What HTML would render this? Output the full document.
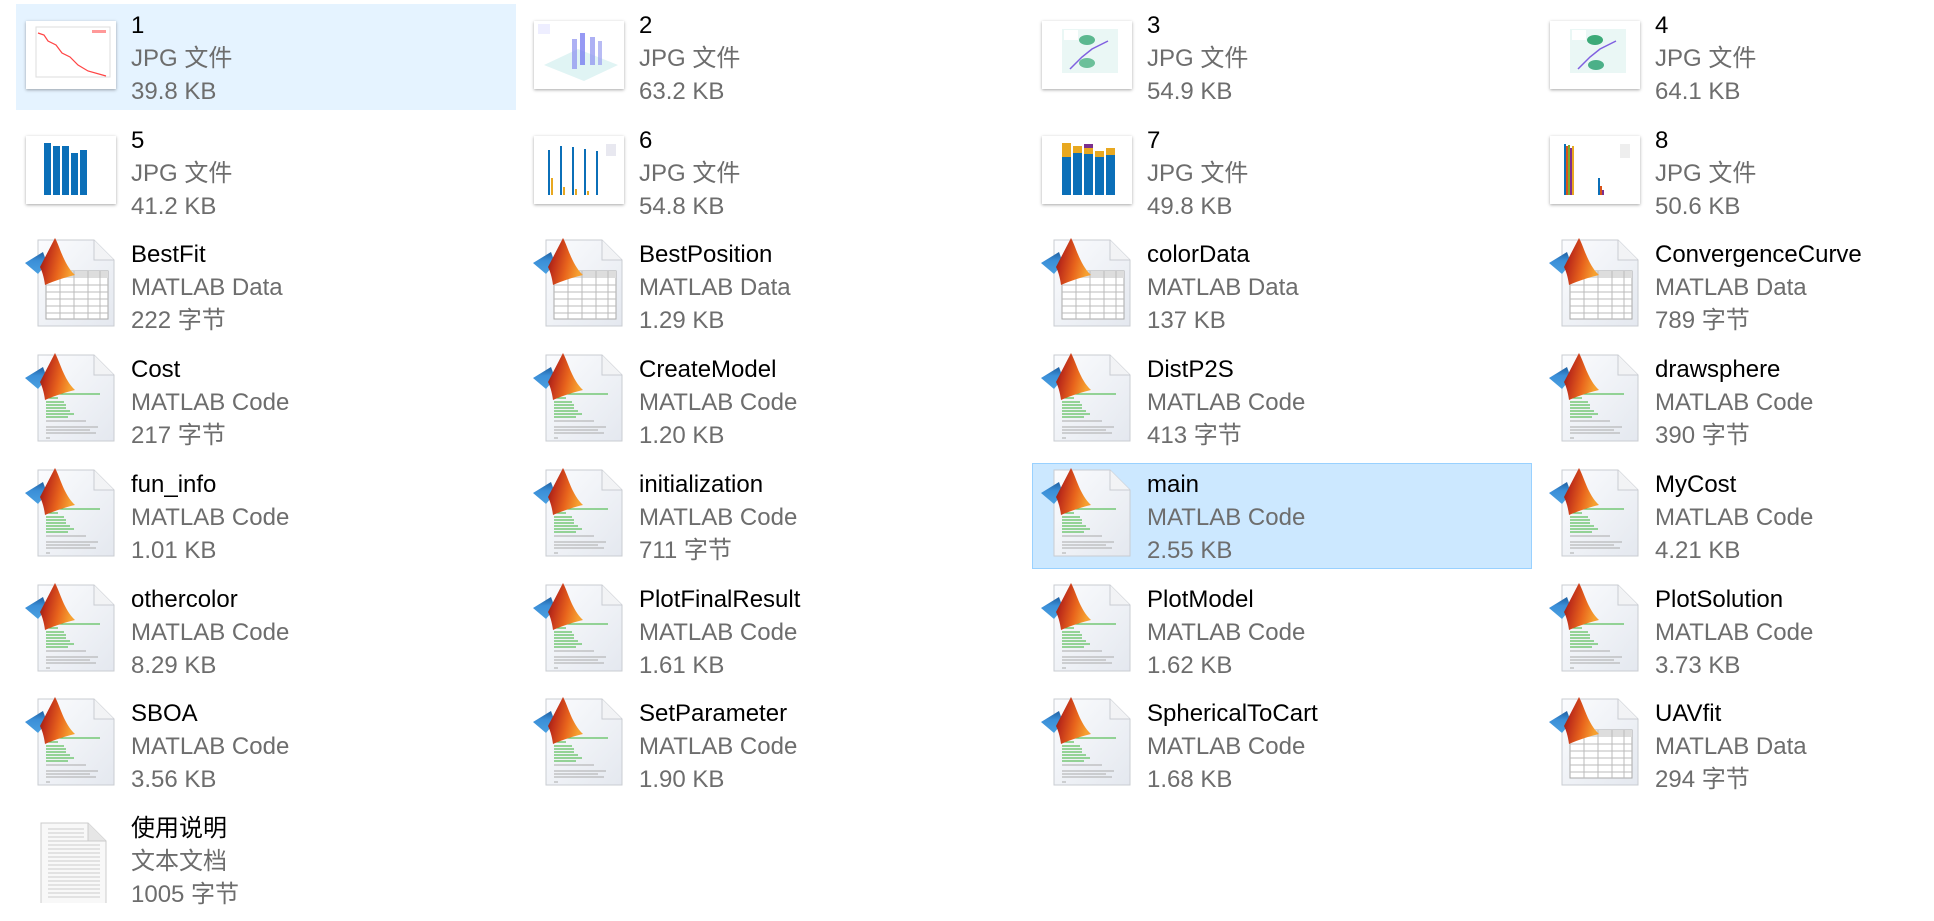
<!DOCTYPE html>
<html><head><meta charset="utf-8">
<style>
html,body{margin:0;padding:0;background:#fff;width:1934px;height:921px;overflow:hidden}
.it{position:absolute;width:500px;height:106px;box-sizing:border-box}
.sel1{background:#e5f3ff}
.sel2{background:#cce8ff;border:1px solid #99d1ff}
.tx{position:absolute;left:115px;top:5px;font-family:"Liberation Sans","Noto Sans CJK SC",sans-serif;font-size:24px;line-height:33px;color:#6d6d6d;white-space:nowrap}
.tx b{font-weight:normal;color:#000;display:block}
.tx span{display:block}
.th{position:absolute;left:10px;top:17px;width:90px;height:68px;background:#fff;box-shadow:0 1px 3px rgba(0,0,0,.35)}
.ic{position:absolute;left:8px;top:4px;width:100px;height:92px}
</style></head><body>
<svg width="0" height="0" style="position:absolute">
<defs>
<linearGradient id="pg" x1="0" y1="0" x2="1" y2="1"><stop offset="0" stop-color="#fbfcfe"/><stop offset="1" stop-color="#e4e8ef"/></linearGradient>
<linearGradient id="og" x1="0" y1="0" x2="1" y2="0.3"><stop offset="0" stop-color="#7a1510"/><stop offset=".3" stop-color="#c0301a"/><stop offset=".65" stop-color="#e8641c"/><stop offset="1" stop-color="#f6a030"/></linearGradient>
<linearGradient id="bg" x1="0" y1="0" x2="0" y2="1"><stop offset="0" stop-color="#1f5fa0"/><stop offset=".4" stop-color="#3b8fd8"/><stop offset="1" stop-color="#4aa0e0"/></linearGradient>
<g id="page"><path d="M14 3 H70 L90 23 V89 H14 Z" fill="url(#pg)" stroke="#c9ccd2"/><path d="M70 3 V23 H90" fill="#f2f3f5" stroke="#c9ccd2"/></g>
<g id="logo"><path d="M1 26 L19 15 L23 26 L14 37 Z" fill="url(#bg)"/><path d="M16 30 L31 1 C36 10 40 28 51 38 C42 40 30 44 21 48 C20 40 18 34 16 30 Z" fill="url(#og)"/></g>
<g id="data"><use href="#page"/><rect x="22" y="34" width="62" height="48" fill="#fff" stroke="#aaa"/><rect x="22" y="34" width="62" height="7" fill="#ddd"/><path d="M22 48H84M22 55H84M22 62H84M22 69H84M22 76H84M36 34V82M50 34V82M64 34V82M76 34V82" stroke="#bbb" fill="none"/></g>
<g id="code"><use href="#page"/><path d="M34 42H76M22 46H34M22 50H40M22 53H42M22 56H42M22 59H46M22 62H50M22 65H44" stroke="#5cbf5c" stroke-width="1.2"/><path d="M22 69H62M22 75H74M22 78H66M22 81H72M22 86H26" stroke="#aaa" stroke-width="1"/></g>
<g id="matdata"><use href="#data"/><use href="#logo"/></g>
<g id="matcode"><use href="#code"/><use href="#logo"/></g>
<g id="txt"><path d="M17 12 H64 L82 30 V94 H17 Z" fill="#f8f8f8" stroke="#ccc"/><path d="M64 12V30H82" fill="#e6e6e6" stroke="#ccc"/><path d="M24 18H60M24 22H60M24 26H60M24 30H76M24 34H76M24 38H76M24 42H76M24 46H76M24 50H76M24 54H76M24 58H76M24 62H76M24 66H76M24 70H76M24 74H76M24 78H76M24 82H76M24 86H76" stroke="#ccc"/></g>
</defs></svg>

<!-- Row 1 -->
<div class="it sel1" style="left:16px;top:4px"><div class="th"><svg width="90" height="68"><rect x="10" y="6" width="74" height="50" fill="none" stroke="#ddd"/><path d="M12 12 L18 14 L22 20 L30 24 L36 32 L44 36 L52 44 L62 50 L80 55" stroke="#f44" fill="none" stroke-width="1.2"/><rect x="66" y="9" width="14" height="3" fill="#f99"/></svg></div><div class="tx"><b>1</b><span>JPG 文件</span><span>39.8 KB</span></div></div>
<div class="it" style="left:524px;top:4px"><div class="th"><svg width="90" height="68"><path d="M10 44 L44 28 L84 44 L50 60 Z" fill="#e0f4f4"/><rect x="38" y="18" width="5" height="30" fill="#8a8ef0" opacity=".7"/><rect x="46" y="12" width="5" height="32" fill="#6a6ef0" opacity=".7"/><rect x="56" y="16" width="5" height="28" fill="#8a8ef0" opacity=".7"/><rect x="64" y="20" width="4" height="24" fill="#9a9ef0" opacity=".7"/><rect x="4" y="3" width="12" height="10" fill="#eef"/></svg></div><div class="tx"><b>2</b><span>JPG 文件</span><span>63.2 KB</span></div></div>
<div class="it" style="left:1032px;top:4px"><div class="th"><svg width="90" height="68"><rect x="20" y="8" width="56" height="44" fill="#eaf7f5"/><ellipse cx="45" cy="19" rx="8" ry="5" fill="#5cb890"/><ellipse cx="45" cy="42" rx="8" ry="5" fill="#6cc09a"/><path d="M28 48 L40 36 L50 28 L66 20" stroke="#8060e0" fill="none" stroke-width="1.5"/><rect x="22" y="9" width="14" height="10" fill="#fff"/></svg></div><div class="tx"><b>3</b><span>JPG 文件</span><span>54.9 KB</span></div></div>
<div class="it" style="left:1540px;top:4px"><div class="th"><svg width="90" height="68"><rect x="20" y="8" width="56" height="44" fill="#eaf7f5"/><ellipse cx="45" cy="19" rx="8" ry="5" fill="#3caa78"/><ellipse cx="46" cy="44" rx="8" ry="5" fill="#4cb088"/><path d="M28 48 L40 36 L50 28 L66 20" stroke="#8060e0" fill="none" stroke-width="1.5"/><rect x="22" y="9" width="14" height="10" fill="#fff"/></svg></div><div class="tx"><b>4</b><span>JPG 文件</span><span>64.1 KB</span></div></div>
<!-- Row 2 -->
<div class="it" style="left:16px;top:119px"><div class="th"><svg width="90" height="68"><rect x="18" y="7" width="7" height="52" fill="#0b6fb8"/><rect x="27" y="10" width="7" height="49" fill="#0b6fb8"/><rect x="36" y="10" width="7" height="49" fill="#0b6fb8"/><rect x="45" y="17" width="7" height="42" fill="#0b6fb8"/><rect x="54" y="14" width="7" height="45" fill="#0b6fb8"/></svg></div><div class="tx"><b>5</b><span>JPG 文件</span><span>41.2 KB</span></div></div>
<div class="it" style="left:524px;top:119px"><div class="th"><svg width="90" height="68"><rect x="14" y="14" width="2" height="45" fill="#0b6fb8"/><rect x="26" y="10" width="2" height="49" fill="#0b6fb8"/><rect x="38" y="11" width="2" height="48" fill="#0b6fb8"/><rect x="50" y="13" width="2" height="46" fill="#0b6fb8"/><rect x="62" y="15" width="2" height="44" fill="#0b6fb8"/><rect x="17" y="42" width="2" height="17" fill="#e8a820"/><rect x="29" y="51" width="2" height="8" fill="#e8a820"/><rect x="41" y="53" width="2" height="6" fill="#e8a820"/><rect x="53" y="55" width="2" height="4" fill="#e8a820"/><rect x="72" y="8" width="10" height="12" fill="#e8e8f0"/></svg></div><div class="tx"><b>6</b><span>JPG 文件</span><span>54.8 KB</span></div></div>
<div class="it" style="left:1032px;top:119px"><div class="th"><svg width="90" height="68"><rect x="20" y="21" width="9" height="38" fill="#0b6fb8"/><rect x="20" y="7" width="9" height="14" fill="#e8a820"/><rect x="31" y="17" width="9" height="42" fill="#0b6fb8"/><rect x="31" y="10" width="9" height="7" fill="#e8a820"/><rect x="42" y="18" width="9" height="41" fill="#0b6fb8"/><rect x="42" y="12" width="9" height="6" fill="#e8a820"/><rect x="42" y="8" width="9" height="4" fill="#7b2f8e"/><rect x="53" y="21" width="9" height="38" fill="#0b6fb8"/><rect x="53" y="15" width="9" height="6" fill="#e8a820"/><rect x="64" y="19" width="9" height="40" fill="#0b6fb8"/><rect x="64" y="12" width="9" height="7" fill="#e8a820"/></svg></div><div class="tx"><b>7</b><span>JPG 文件</span><span>49.8 KB</span></div></div>
<div class="it" style="left:1540px;top:119px"><div class="th"><svg width="90" height="68"><rect x="14" y="8" width="2" height="51" fill="#0b6fb8"/><rect x="16" y="10" width="2" height="49" fill="#d95319"/><rect x="18" y="9" width="2" height="50" fill="#77ac30"/><rect x="20" y="12" width="2" height="47" fill="#7e2f8e"/><rect x="22" y="10" width="2" height="49" fill="#e8a820"/><rect x="48" y="42" width="2" height="17" fill="#0b6fb8"/><rect x="50" y="50" width="2" height="9" fill="#d95319"/><rect x="52" y="54" width="2" height="5" fill="#7e2f8e"/><rect x="70" y="8" width="10" height="14" fill="#eee"/></svg></div><div class="tx"><b>8</b><span>JPG 文件</span><span>50.6 KB</span></div></div>
<!-- Row 3 -->
<div class="it" style="left:16px;top:233px"><svg class="ic"><use href="#matdata"/></svg><div class="tx"><b>BestFit</b><span>MATLAB Data</span><span>222 字节</span></div></div>
<div class="it" style="left:524px;top:233px"><svg class="ic"><use href="#matdata"/></svg><div class="tx"><b>BestPosition</b><span>MATLAB Data</span><span>1.29 KB</span></div></div>
<div class="it" style="left:1032px;top:233px"><svg class="ic"><use href="#matdata"/></svg><div class="tx"><b>colorData</b><span>MATLAB Data</span><span>137 KB</span></div></div>
<div class="it" style="left:1540px;top:233px"><svg class="ic"><use href="#matdata"/></svg><div class="tx"><b>ConvergenceCurve</b><span>MATLAB Data</span><span>789 字节</span></div></div>
<!-- Row 4 -->
<div class="it" style="left:16px;top:348px"><svg class="ic"><use href="#matcode"/></svg><div class="tx"><b>Cost</b><span>MATLAB Code</span><span>217 字节</span></div></div>
<div class="it" style="left:524px;top:348px"><svg class="ic"><use href="#matcode"/></svg><div class="tx"><b>CreateModel</b><span>MATLAB Code</span><span>1.20 KB</span></div></div>
<div class="it" style="left:1032px;top:348px"><svg class="ic"><use href="#matcode"/></svg><div class="tx"><b>DistP2S</b><span>MATLAB Code</span><span>413 字节</span></div></div>
<div class="it" style="left:1540px;top:348px"><svg class="ic"><use href="#matcode"/></svg><div class="tx"><b>drawsphere</b><span>MATLAB Code</span><span>390 字节</span></div></div>
<!-- Row 5 -->
<div class="it" style="left:16px;top:463px"><svg class="ic"><use href="#matcode"/></svg><div class="tx"><b>fun_info</b><span>MATLAB Code</span><span>1.01 KB</span></div></div>
<div class="it" style="left:524px;top:463px"><svg class="ic"><use href="#matcode"/></svg><div class="tx"><b>initialization</b><span>MATLAB Code</span><span>711 字节</span></div></div>
<div class="it sel2" style="left:1032px;top:463px"><svg class="ic" style="left:7px;top:3px"><use href="#matcode"/></svg><div class="tx" style="left:114px;top:4px"><b>main</b><span>MATLAB Code</span><span>2.55 KB</span></div></div>
<div class="it" style="left:1540px;top:463px"><svg class="ic"><use href="#matcode"/></svg><div class="tx"><b>MyCost</b><span>MATLAB Code</span><span>4.21 KB</span></div></div>
<!-- Row 6 -->
<div class="it" style="left:16px;top:578px"><svg class="ic"><use href="#matcode"/></svg><div class="tx"><b>othercolor</b><span>MATLAB Code</span><span>8.29 KB</span></div></div>
<div class="it" style="left:524px;top:578px"><svg class="ic"><use href="#matcode"/></svg><div class="tx"><b>PlotFinalResult</b><span>MATLAB Code</span><span>1.61 KB</span></div></div>
<div class="it" style="left:1032px;top:578px"><svg class="ic"><use href="#matcode"/></svg><div class="tx"><b>PlotModel</b><span>MATLAB Code</span><span>1.62 KB</span></div></div>
<div class="it" style="left:1540px;top:578px"><svg class="ic"><use href="#matcode"/></svg><div class="tx"><b>PlotSolution</b><span>MATLAB Code</span><span>3.73 KB</span></div></div>
<!-- Row 7 -->
<div class="it" style="left:16px;top:692px"><svg class="ic"><use href="#matcode"/></svg><div class="tx"><b>SBOA</b><span>MATLAB Code</span><span>3.56 KB</span></div></div>
<div class="it" style="left:524px;top:692px"><svg class="ic"><use href="#matcode"/></svg><div class="tx"><b>SetParameter</b><span>MATLAB Code</span><span>1.90 KB</span></div></div>
<div class="it" style="left:1032px;top:692px"><svg class="ic"><use href="#matcode"/></svg><div class="tx"><b>SphericalToCart</b><span>MATLAB Code</span><span>1.68 KB</span></div></div>
<div class="it" style="left:1540px;top:692px"><svg class="ic"><use href="#matdata"/></svg><div class="tx"><b>UAVfit</b><span>MATLAB Data</span><span>294 字节</span></div></div>
<!-- Row 8 -->
<div class="it" style="left:16px;top:807px"><svg class="ic"><use href="#txt"/></svg><div class="tx"><b>使用说明</b><span>文本文档</span><span>1005 字节</span></div></div>
</body></html>
